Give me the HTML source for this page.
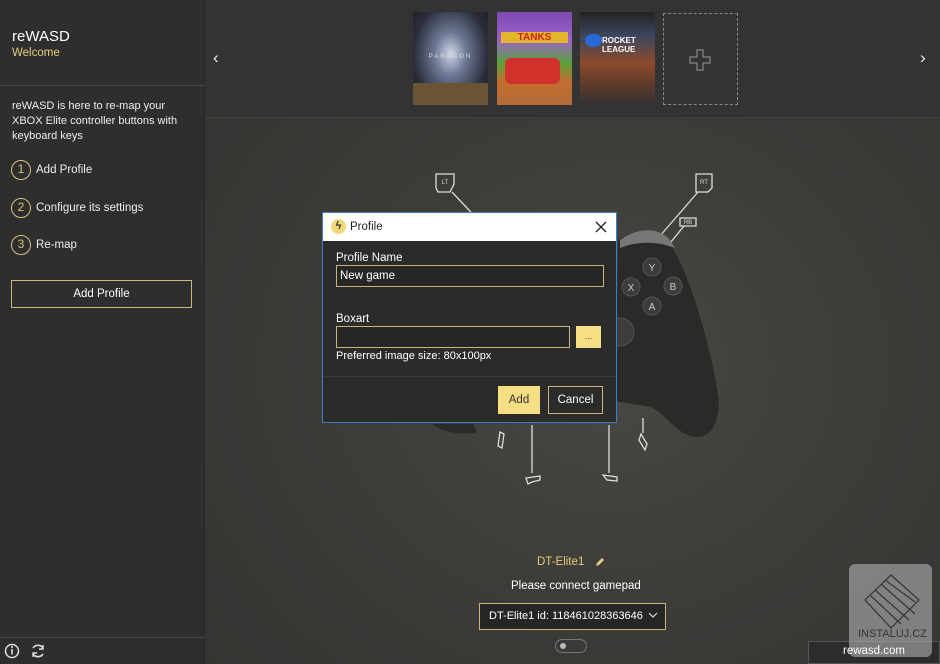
<!DOCTYPE html>
<html><head><meta charset="utf-8"><style>
*{margin:0;padding:0;box-sizing:border-box}
body{width:940px;height:664px;overflow:hidden;font-family:"Segoe UI","Liberation Sans",sans-serif;color:#fff;background:#3a3936;position:relative;font-size:12px}
.side{position:absolute;left:0;top:0;width:205px;height:664px;background:#2e2e2e;border-right:1px solid #262626}
.main{position:absolute;left:205px;top:0;width:735px;height:664px;background:radial-gradient(ellipse at 55% 55%,#4a4844 0%,#3d3c39 45%,#343331 100%)}
.top{position:absolute;left:205px;top:0;width:735px;height:118px;background:#333;border-bottom:1px solid #3e3e3e}
.abs{position:absolute}
.circ{position:absolute;width:20px;height:20px;border:1.5px solid #d9c27a;border-radius:50%;color:#d9c27a;font-size:12px;text-align:center;line-height:17px}
.step{position:absolute;left:36px;font-size:11.5px;color:#eee}
.cover{position:absolute;top:12px;width:75px;height:93px}
</style></head><body>
<div class="side">
 <div class="abs" style="left:12px;top:28px;font-size:15px;color:#fff">reWASD</div>
 <div class="abs" style="left:12px;top:47px;font-size:11.5px;color:#e6cf7c">Welcome</div>
 <div class="abs" style="left:0;top:85px;width:205px;height:1px;background:#444"></div>
 <div class="abs" style="left:12px;top:99px;width:185px;line-height:15px;font-size:11px;color:#eee">reWASD is here to re-map your XBOX Elite controller buttons with keyboard keys</div>
 <div class="circ" style="left:11px;top:160px">1</div><div class="step" style="top:164px">Add Profile</div>
 <div class="circ" style="left:11px;top:198px">2</div><div class="step" style="top:202px">Configure its settings</div>
 <div class="circ" style="left:11px;top:235px">3</div><div class="step" style="top:239px">Re-map</div>
 <div class="abs" style="left:11px;top:280px;width:181px;height:28px;border:1.5px solid #cdbb7e;text-align:center;line-height:26px;font-size:11.5px">Add Profile</div>
 <div class="abs" style="left:0;top:637px;width:205px;height:1px;background:#444"></div>
 <svg class="abs" style="left:4px;top:642px" width="50" height="18" viewBox="0 0 50 18"><circle cx="8" cy="9" r="6.5" fill="none" stroke="#ddd" stroke-width="1.5"/><line x1="8" y1="7" x2="8" y2="12.5" stroke="#ddd" stroke-width="1.6"/><circle cx="8" cy="5" r="1" fill="#ddd"/><path d="M29 6a6 6 0 0 1 10 0M39 12a6 6 0 0 1-10 0" fill="none" stroke="#ddd" stroke-width="1.6"/><path d="M39 3v4h-4M29 15v-4h4" fill="none" stroke="#ddd" stroke-width="1.4"/></svg>
</div>
<div class="main"></div>
<div class="top"></div>
<div class="abs" style="left:213px;top:48px;font-size:17px;color:#eee">‹</div>
<div class="abs" style="left:920px;top:48px;font-size:17px;color:#eee">›</div>
<div class="cover" style="left:413px;background:radial-gradient(ellipse at 50% 45%,#cfd6e6 0%,#6d7895 30%,#2a2d3a 70%,#1d1d22 100%)"><div style="position:absolute;top:42px;width:100%;text-align:center;font-size:6px;letter-spacing:2px;color:#ddd">PARAGON</div><div style="position:absolute;bottom:0;width:100%;height:22px;background:#6b5436"></div></div>
<div class="cover" style="left:497px;background:linear-gradient(#7d4bb0 0%,#9b62c9 30%,#5aa23a 55%,#c46d2e 75%,#b06a38 100%)"><div style="position:absolute;top:20px;left:4px;right:4px;background:#e3b52a;color:#c22;font-weight:bold;font-size:10px;text-align:center">TANKS</div><div style="position:absolute;top:46px;left:8px;width:55px;height:26px;background:#d2302a;border-radius:6px"></div></div>
<div class="cover" style="left:580px;background:linear-gradient(#222 0%,#3a4660 25%,#8c4a2a 55%,#5a3a2a 80%,#333 100%)"><div style="position:absolute;top:24px;left:22px;font-size:8px;font-weight:bold;color:#fff;line-height:9px">ROCKET<br>LEAGUE</div><div style="position:absolute;top:22px;left:5px;width:17px;height:13px;border-radius:50%;background:#2a6ad8"></div></div>
<div class="abs" style="left:663px;top:13px;width:75px;height:92px;border:1px dashed #888"></div>
<svg class="abs" style="left:688px;top:48px" width="24" height="24" viewBox="0 0 24 24"><path d="M9 2h6v7h7v6h-7v7H9v-7H2V9h7z" fill="none" stroke="#888" stroke-width="1.2"/></svg>

<svg class="abs" style="left:420px;top:165px" width="320" height="330" viewBox="420 165 320 330">
 <g fill="none" stroke="#ddd" stroke-width="1.3">
  <path d="M436 174h18v10l-4 8h-12l-2-4z"/><path d="M452 192l30 32"/>
  <path d="M696 174h16v14l-4 4h-12z"/><path d="M698 192l-45 52"/>
  <path d="M680 218h16v8h-16z"/><path d="M684 226l-18 22"/>
  <path d="M532 425v48"/><path d="M609 425v48"/>
  <path d="M526 478l14-2v4l-8 2-4 2z"/><path d="M603 475l14 2v4l-10-1z"/>
  <path d="M500 432l4 2-2 14-4-2z"/><path d="M643 418v15"/><path d="M641 434l6 10-2 6-6-10z"/>
 </g>
 <path d="M618 240c20-12 40-10 52 4 20 30 40 100 48 150 4 30-10 48-28 42-18-6-30-30-45-30l-30-5z" fill="#2b2a29"/>
 <path d="M620 240c20-14 40-12 50 0l5 8c-20-8-40-6-55 0z" fill="#777"/>
 <path d="M432 424c10 8 30 12 45 8l-4-8z" fill="#2b2a29"/>
 <g fill="#3d3c3a" stroke="#555"><circle cx="652" cy="267" r="9"/><circle cx="631" cy="287" r="9"/><circle cx="673" cy="286" r="9"/><circle cx="652" cy="306" r="9"/><circle cx="620" cy="332" r="14"/></g>
 <g fill="#ccc" font-size="10" font-family="Liberation Sans" text-anchor="middle"><text x="652" y="271">Y</text><text x="631" y="291">X</text><text x="673" y="290">B</text><text x="652" y="310">A</text></g>
 <g fill="#ddd" font-size="6" font-family="Liberation Sans" text-anchor="middle"><text x="445" y="184">LT</text><text x="704" y="184">RT</text><text x="688" y="224">RB</text></g>
</svg>

<div class="abs" style="left:322px;top:212px;width:295px;height:211px;background:#2b2b2b;border:1px solid #3d7fc2">
 <div style="height:28px;background:#fff;position:relative">
  <div style="position:absolute;left:8px;top:6px;width:15px;height:15px;border-radius:50%;background:#f3d87a;color:#333;font-size:11px;text-align:center;line-height:15px;font-weight:bold">ϟ</div>
  <div style="position:absolute;left:27px;top:8px;color:#222;font-size:11.5px">Profile</div>
  <svg style="position:absolute;right:9px;top:8px" width="12" height="12"><path d="M1 1l10 10M11 1L1 11" stroke="#222" stroke-width="1.3"/></svg>
 </div>
 <div class="abs" style="left:13px;top:39px;font-size:11.5px">Profile Name</div>
 <div class="abs" style="left:13px;top:52px;width:268px;height:22px;border:1.5px solid #c9b77a;background:#262626;padding-left:3px;line-height:20px;font-size:11.5px">New game</div>
 <div class="abs" style="left:13px;top:100px;font-size:11.5px">Boxart</div>
 <div class="abs" style="left:13px;top:113px;width:234px;height:22px;border:1.5px solid #c9b77a;background:#262626"></div>
 <div class="abs" style="left:253px;top:113px;width:25px;height:22px;background:#f5de83;color:#444;text-align:center;font-size:9px;line-height:20px">...</div>
 <div class="abs" style="left:13px;top:137px;font-size:11px">Preferred image size: 80x100px</div>
 <div class="abs" style="left:0;top:163px;width:293px;height:1px;background:#3a3a3a"></div>
 <div class="abs" style="left:175px;top:173px;width:42px;height:28px;background:#f5de83;color:#333;text-align:center;line-height:29px;font-size:11.5px">Add</div>
 <div class="abs" style="left:225px;top:173px;width:55px;height:28px;border:1.5px solid #c9b77a;text-align:center;line-height:27px;font-size:11.5px">Cancel</div>
</div>

<div class="abs" style="left:537px;top:556px;font-size:11.5px;color:#e6cf7c">DT-Elite1</div>
<svg class="abs" style="left:595px;top:557px" width="10" height="10"><path d="M1 9l1-3 5-5 2 2-5 5z" fill="#e6cf7c"/></svg>
<div class="abs" style="left:511px;top:580px;font-size:11.5px">Please connect gamepad</div>
<div class="abs" style="left:479px;top:603px;width:187px;height:27px;border:1.5px solid #c9b77a;background:#262626;padding-left:9px;line-height:25px;font-size:11px">DT-Elite1 id: 118461028363646</div>
<svg class="abs" style="left:648px;top:612px" width="10" height="7"><path d="M1 1l4 4 4-4" fill="none" stroke="#ddd" stroke-width="1.2"/></svg>
<div class="abs" style="left:555px;top:639px;width:32px;height:14px;border:1.5px solid #777;border-radius:8px"><div style="position:absolute;left:4px;top:3px;width:6px;height:6px;border-radius:50%;background:#bbb"></div></div>

<div class="abs" style="left:808px;top:641px;width:132px;height:23px;border:1px solid #555;background:#2c2c2c"></div>
<div class="abs" style="left:849px;top:564px;width:83px;height:93px;background:rgba(190,190,190,0.55);border-radius:6px"></div>
<svg class="abs" style="left:855px;top:570px" width="72" height="60" viewBox="0 0 72 60"><g fill="none" stroke="#333" stroke-width="1.2"><path d="M10 30L36 5 64 30 36 58z"/><path d="M20 20l34 30M26 14l34 30M30 10l30 22M16 26l30 28"/></g></svg>
<div class="abs" style="left:858px;top:628px;font-size:11px;color:#333">INSTALUJ.CZ</div>
<div class="abs" style="left:843px;top:645px;font-size:11.5px;color:#fff">rewasd.com</div>
</body></html>
